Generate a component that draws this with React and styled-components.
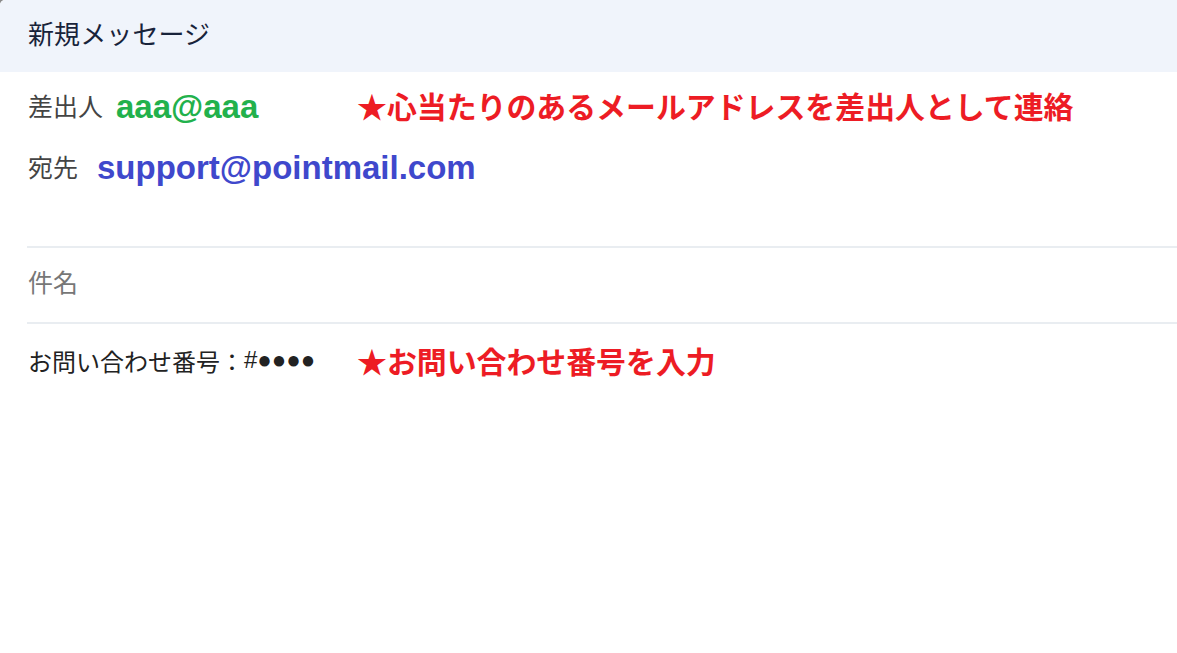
import React from "react";
import styled, { createGlobalStyle } from "styled-components";

const Global = createGlobalStyle`
  html { background: #8a8a8a; }
  body {
    margin: 0;
    background: #8a8a8a;
    font-family: "Noto Sans CJK JP", "Noto Sans", sans-serif;
  }
`;

const Window = styled.div`
  min-height: 100vh;
  background: #ffffff;
  border-top-left-radius: 5px;
  overflow: hidden;
`;

const Header = styled.div`
  height: 72px;
  box-sizing: border-box;
  padding: 0 0 7px 28px;
  display: flex;
  align-items: center;
  background: #f0f4fb;
  color: #18233a;
  font-size: 26px;
  letter-spacing: 0.1px;
`;

const Body = styled.div`
  padding-left: 27px;
`;

const FieldRow = styled.div`
  display: grid;
  grid-template-columns: 330px 1fr;
  align-items: center;
  height: ${(p) => p.$h}px;
`;

const Cell = styled.div`
  display: flex;
  align-items: center;
  padding-left: 1px;
`;

const Label = styled.span`
  font-size: 25px;
  color: ${(p) => p.$color || "#444444"};
  margin-right: ${(p) => p.$gap || 0}px;
  position: relative;
  top: -2px;
  white-space: nowrap;
`;

const Address = styled.span`
  font-family: "Liberation Sans", Arial, sans-serif;
  font-weight: 700;
  font-size: 33px;
  color: ${(p) => p.$color};
  white-space: nowrap;
`;

const Caret = styled.span`
  display: inline-block;
  width: 2px;
  height: 14px;
  background: #ffc90e;
  margin: 6px 1px 0 0;
`;

const Note = styled.span`
  font-size: 29.9px;
  font-weight: 700;
  color: #ed1c24;
  white-space: nowrap;
  position: relative;
  top: ${(p) => p.$shift || 0}px;
`;

const Spacer = styled.div`
  height: ${(p) => p.$h}px;
`;

const Divider = styled.div`
  height: 2px;
  background: #e9edf1;
`;

const SubjectRow = styled.div`
  height: 74px;
  box-sizing: border-box;
  padding: 0 0 5px 1px;
  display: flex;
  align-items: center;
`;

const Message = styled.span`
  font-size: 24px;
  color: #222222;
  white-space: nowrap;
`;

const Mask = styled.span`
  font-family: "Liberation Sans", Arial, sans-serif;
  font-size: 24px;
  color: #222222;
`;

export default function App() {
  return (
    <>
      <Global />
      <Window>
        <Header>新規メッセージ</Header>
        <Body>
          <Spacer $h={11} />
          <FieldRow $h={48}>
            <Cell>
              <Label $gap={13}>差出人</Label>
              <Address $color="#22b14c">aaa@aaa</Address>
            </Cell>
            <Note $shift={-2}>★心当たりのあるメールアドレスを差出人として連絡</Note>
          </FieldRow>
          <Spacer $h={13} />
          <FieldRow $h={48}>
            <Cell>
              <Label $gap={18}>宛先</Label>
              <Caret />
              <Address $color="#3f48cc">support@pointmail.com</Address>
            </Cell>
          </FieldRow>
          <Spacer $h={54} />
          <Divider />
          <SubjectRow>
            <Label $color="#777777">件名</Label>
          </SubjectRow>
          <Divider />
          <FieldRow $h={72}>
            <Cell>
              <Message>お問い合わせ番号：</Message>
              <Mask>#●●●●</Mask>
            </Cell>
            <Note>★お問い合わせ番号を入力</Note>
          </FieldRow>
        </Body>
      </Window>
    </>
  );
}
